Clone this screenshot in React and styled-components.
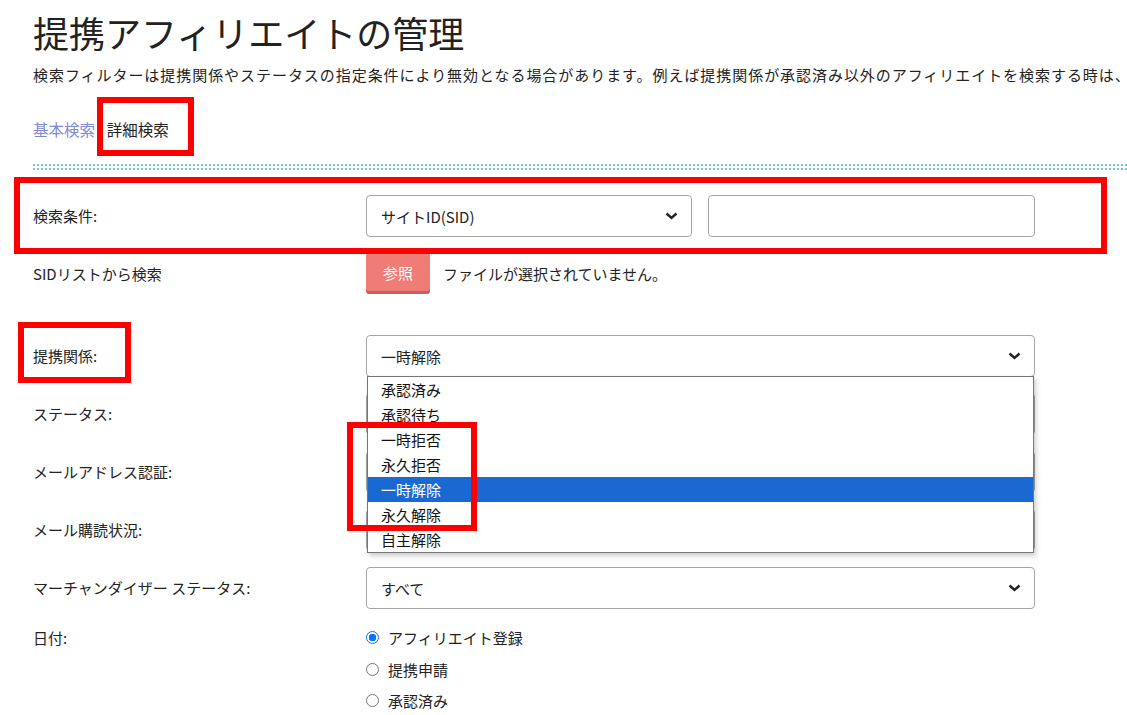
import styled, { createGlobalStyle } from 'styled-components';

const GlobalStyle = createGlobalStyle`
  body {
    margin: 0;
    background: #fff;
    color: #212529;
    font-family: "Noto Sans CJK JP", "Noto Sans", sans-serif;
    overflow: hidden;
  }
`;

const statusOptions = ['承認済み', '承認待ち', '一時拒否', '永久拒否', '一時解除', '永久解除', '自主解除'];

const Chevron = () => (
  <svg width="13" height="8" viewBox="0 0 13 8">
    <path d="M1.5 1.5 L6.5 6 L11.5 1.5" fill="none" stroke="#222" strokeWidth="2.4" />
  </svg>
);

const App = () => {
  return (
    <Page>
      <GlobalStyle />
      <Title>提携アフィリエイトの管理</Title>
      <Description>
        検索フィルターは提携関係やステータスの指定条件により無効となる場合があります。例えば提携関係が承認済み以外のアフィリエイトを検索する時は、
      </Description>
      <Tabs>
        <TabLink href="#">基本検索</TabLink>
        <TabSep>|</TabSep>
        <TabCurrent>詳細検索</TabCurrent>
      </Tabs>
      <Divider />

      <Form>
        <Row>
          <Label>検索条件:</Label>
          <Pair>
            <Select>
              <span>サイトID(SID)</span>
              <Chevron />
            </Select>
            <TextInput />
          </Pair>
        </Row>
        <Row $gap={41}>
          <Label>SIDリストから検索</Label>
          <FileLine>
            <BrowseButton>参照</BrowseButton>
            <FileText>ファイルが選択されていません。</FileText>
          </FileLine>
        </Row>
        <Row>
          <Label>提携関係:</Label>
          <SelectWrap>
            <Select>
              <span>一時解除</span>
              <Chevron />
            </Select>
            <OptionList>
              {statusOptions.map((o) => (
                <Option key={o} $active={o === '一時解除'}>{o}</Option>
              ))}
            </OptionList>
          </SelectWrap>
        </Row>
        <Row>
          <Label>ステータス:</Label>
          <Select />
        </Row>
        <Row>
          <Label>メールアドレス認証:</Label>
          <Select />
        </Row>
        <Row>
          <Label>メール購読状況:</Label>
          <Select />
        </Row>
        <Row $gap={13}>
          <Label>マーチャンダイザー ステータス:</Label>
          <Select>
            <span>すべて</span>
            <Chevron />
          </Select>
        </Row>
        <Row $align="start">
          <Label $tall>日付:</Label>
          <Radios>
            <RadioItem>
              <Radio $checked />
              アフィリエイト登録
            </RadioItem>
            <RadioItem>
              <Radio />
              提携申請
            </RadioItem>
            <RadioItem>
              <Radio />
              承認済み
            </RadioItem>
          </Radios>
        </Row>
      </Form>

      <Mark $x={97} $y={97} $w={97} $h={59} />
      <Mark $x={14} $y={177} $w={1093} $h={77} />
      <Mark $x={18} $y={322} $w={113} $h={61} />
      <Mark $x={347} $y={422} $w={130} $h={109} />
    </Page>
  );
};

const Page = styled.div`
  position: relative;
  padding: 10px 0 0 33px;
  height: 705px;
  overflow: hidden;
`;

const Title = styled.h1`
  margin: 0;
  font-size: 36px;
  font-weight: 400;
  line-height: 44px;
  color: #222;
`;

const Description = styled.p`
  margin: 10px 0 0;
  font-size: 15px;
  line-height: 22px;
  letter-spacing: 0.95px;
  white-space: nowrap;
  color: #222;
`;

const Tabs = styled.div`
  display: flex;
  align-items: center;
  margin-top: 32px;
  font-size: 15.5px;
  line-height: 22px;
`;

const TabLink = styled.a`
  color: #8088d4;
  text-decoration: none;
`;

const TabSep = styled.span`
  color: #cfd2e6;
  margin: 0 4px 0 4px;
  font-size: 14px;
`;

const TabCurrent = styled.span`
  color: #222;
`;

const Divider = styled.div`
  margin-top: 24px;
  height: 2px;
  border-top: 2px dotted #6fc9c9;
  border-bottom: 2px dotted #6fc9c9;
`;

const Form = styled.div`
  margin-top: 25px;
  width: 1002px;
`;

const Row = styled.div`
  display: grid;
  grid-template-columns: 333px 669px;
  align-items: ${(p) => p.$align || 'center'};
  margin-bottom: ${(p) => (p.$gap ?? 16)}px;
`;

const Label = styled.div`
  font-size: 15px;
  line-height: ${(p) => (p.$tall ? '31px' : '22px')};
  color: #222;
`;

const Pair = styled.div`
  display: grid;
  grid-template-columns: 326px 327px;
  gap: 16px;
`;

const Select = styled.div`
  box-sizing: border-box;
  height: 42px;
  display: flex;
  align-items: center;
  justify-content: space-between;
  padding: 0 13px 0 14px;
  border: 1px solid #a6a6a6;
  border-radius: 4px;
  background: #fff;
  font-size: 15px;
  color: #222;
`;

const TextInput = styled.div`
  box-sizing: border-box;
  height: 42px;
  border: 1px solid #a6a6a6;
  border-radius: 4px;
  background: #fff;
`;

const FileLine = styled.div`
  display: flex;
  align-items: center;
`;

const BrowseButton = styled.div`
  width: 64px;
  height: 38px;
  margin-bottom: 3px;
  display: flex;
  align-items: center;
  justify-content: center;
  background: #f07c76;
  border-radius: 3px;
  box-shadow: 0 3px 0 #c9625e;
  color: #fff;
  font-size: 15px;
`;

const FileText = styled.span`
  margin-left: 13px;
  font-size: 15px;
  color: #222;
`;

const SelectWrap = styled.div`
  position: relative;
`;

const OptionList = styled.div`
  position: absolute;
  top: 41px;
  left: 1px;
  right: 1px;
  z-index: 2;
  border: 1px solid #767676;
  background: #fff;
  box-shadow: 2px 3px 5px rgba(0, 0, 0, 0.2);
`;

const Option = styled.div`
  height: 25px;
  line-height: 25px;
  padding-left: 13px;
  font-size: 15px;
  color: ${(p) => (p.$active ? '#fff' : '#111')};
  background: ${(p) => (p.$active ? '#1a69d3' : 'transparent')};
`;

const Radios = styled.div`
  display: flex;
  flex-direction: column;
`;

const RadioItem = styled.label`
  display: flex;
  align-items: center;
  height: 31.5px;
  font-size: 15px;
  color: #222;
`;

const Radio = styled.span`
  box-sizing: border-box;
  width: 13px;
  height: 13px;
  margin: 0 9px 0 0;
  border-radius: 50%;
  border: ${(p) => (p.$checked ? '1px solid #0075ff' : '1px solid #767676')};
  background: ${(p) => (p.$checked ? 'radial-gradient(circle, #0075ff 0 3.5px, #fff 4px)' : '#fff')};
`;

const Mark = styled.div`
  position: absolute;
  z-index: 5;
  box-sizing: border-box;
  left: ${(p) => p.$x}px;
  top: ${(p) => p.$y}px;
  width: ${(p) => p.$w}px;
  height: ${(p) => p.$h}px;
  border: 6px solid #ff0000;
  pointer-events: none;
`;

export default App;
